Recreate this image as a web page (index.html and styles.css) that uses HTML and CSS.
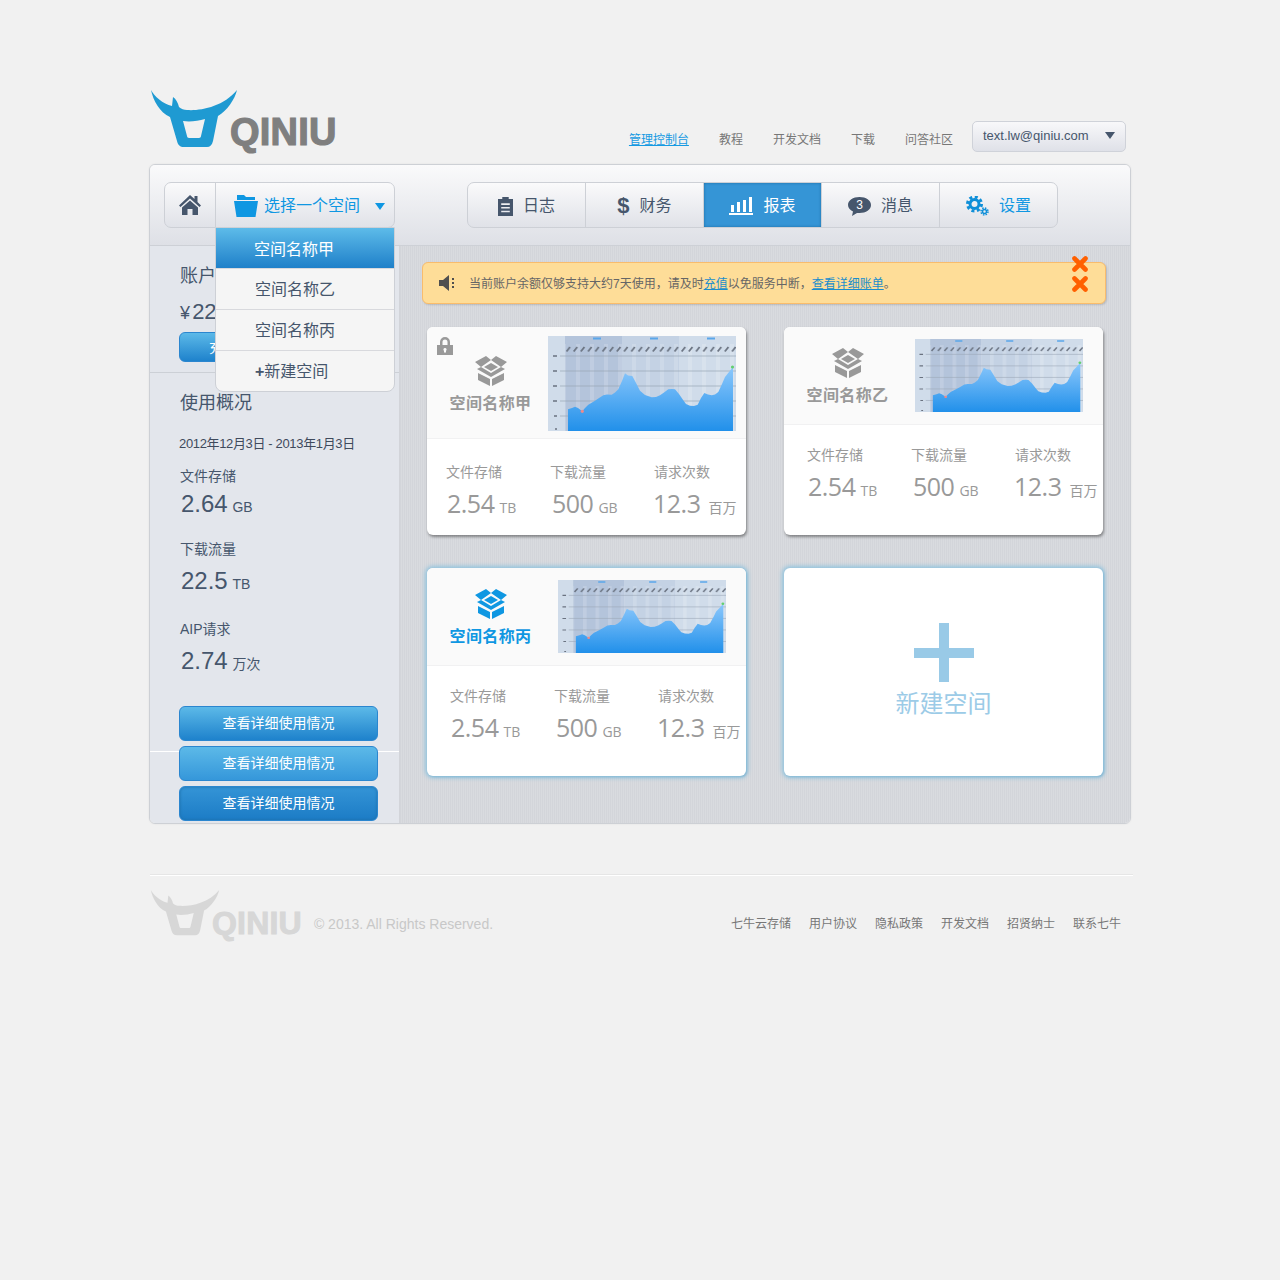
FILE: index.html
```html
<!DOCTYPE html>
<html lang="zh-CN">
<head>
  <meta charset="UTF-8">
  <title>七牛云存储 - 管理控制台</title>
  <link rel="stylesheet" href="styles.css">
</head>
<body>
  <svg class="defs" aria-hidden="true">
    <defs>
      <linearGradient id="areaFill" x1="0" y1="0" x2="0" y2="1">
        <stop offset="0" stop-color="#8cc8fc"/>
        <stop offset="1" stop-color="#2190ea"/>
      </linearGradient>
      <pattern id="chartStripes" width="14" height="95" patternUnits="userSpaceOnUse">
        <rect x="0" width="4" height="95" fill="#fff" opacity=".16"/>
      </pattern>
      <pattern id="chartTicks" x="17" y="8" width="7.2" height="10" patternUnits="userSpaceOnUse">
        <path d="M1.500 7.500 L5 3" stroke="#6b7482" stroke-width="1.800"/>
      </pattern>
    </defs>
    <symbol id="chart" viewBox="0 0 188 95" preserveAspectRatio="none">
      <rect width="188" height="95" fill="#d0dcea"/>
      <rect x="17" width="57" height="95" fill="#b4c4db"/>
      <rect x="74" width="57" height="95" fill="#c4d2e4"/>
      <rect x="17" y="8" width="171" height="87" fill="url(#chartStripes)"/>
      <path d="M12 20H188M12 35H188M12 50H188M12 65H188M12 80H188" stroke="#9aa6b6" stroke-width=".7"/>
      <rect x="17" y="8" width="171" height="10" fill="url(#chartTicks)"/>
      <path d="M45 2.500h8M102 2.500h8M159 2.500h8" stroke="#5aa6ea" stroke-width="2"/>
      <path d="M5 20h4M5 35h4M5 50h4M5 65h4M6 80h3M7 93h2" stroke="#6a7280" stroke-width="1.400"/>
      <path fill="url(#areaFill)" d="M20 73.300L24 72 27 70.700 30 72 34.300 75.300 37 72 40.300 68.700 47 64.700 51 62 55.300 59.300 59 58.500 63.700 58.700 67 56.500 70.300 53.300 74 45 77 37.300 80 39.500 84.300 40 87 45 92 54.700 97 59 103.700 61.300 108 61 112 59.300 116 56.500 120.300 53.300 124 53 127 53.300 131 58 135.300 64.300 138 68 142 69.700 146 70 149.700 68.700 153 62 156.300 57 160 58.500 163.700 59.300 167 58.500 170.300 56 174 48 177 41 181 36 185 30.700V95H20Z"/>
      <circle cx="34.300" cy="75.300" r="1.600" fill="#ee8a8a"/>
      <circle cx="184.500" cy="31" r="1.600" fill="#63cf70"/>
    </symbol>
    <symbol id="bull" viewBox="0 0 88 60">
      <path fill-rule="evenodd" d="M1 1C4 7 13 15 22 17L23 8C26 10 28 14 29 18 31 20 34 21 37 21 50 22 73 18 87 1 85 10 77 22 68 27L63 52C62 56 60 58 57 58H34C30 58 28 56 27 52L20 28C10 24 3 11 1 1ZM33 32L37 47C37 48 38 49 39 49H49C50 49 51 48 51 47L55 30C48 32 40 33 33 32Z"/>
    </symbol>
    <symbol id="box" viewBox="0 0 32 30">
      <path d="M0 6L11 0 16 4 6 11ZM21 0L32 6 26 11 16 4ZM16 7L23 11 16 15 9 11ZM2 13L6 11 16 17 26 11 30 13 16 21ZM3 17L15 23V30L3 24ZM29 17L17 23V30L29 24Z"/>
    </symbol>
    <symbol id="cross" viewBox="0 0 16 16">
      <path d="M2.500 2.500L13.500 13.500M13.500 2.500L2.500 13.500" stroke="#ff6000" stroke-width="4.600" stroke-linecap="round" fill="none"/>
    </symbol>
  </svg>

  <div class="wrap">
    <header class="top">
      <a class="logo" href="#">
        <svg class="logo-bull"><use href="#bull"/></svg>
        <span class="logo-text">QINIU</span>
      </a>
      <nav class="top-nav">
        <a class="on" href="#">管理控制台</a>
        <a href="#">教程</a>
        <a href="#">开发文档</a>
        <a href="#">下载</a>
        <a href="#">问答社区</a>
      </nav>
      <div class="user-box">
        <span>text.lw@qiniu.com</span>
        <i class="caret"></i>
      </div>
    </header>

    <section class="panel">
      <div class="toolbar">
        <div class="space-picker">
          <a class="home-btn" href="#">
            <svg width="24" height="22" viewBox="0 0 24 22" fill="#46566c"><path d="M12 1L1 11.500 2.500 13 12 4.500 21.500 13 23 11.500 19.500 8V2H16.500V5ZM4 13.500L12 6.500 20 13.500V21H14.500V15H9.500V21H4Z"/></svg>
          </a>
          <a class="space-select" href="#">
            <svg width="24" height="22" viewBox="0 0 24 22" fill="#0f97e2"><path d="M3 0H10L12 2H21V5H3ZM0 6H24L21.500 22H2.500Z"/></svg>
            <span>选择一个空间</span>
            <i class="caret caret-blue"></i>
          </a>
          <ul class="space-menu">
            <li class="on">空间名称甲</li>
            <li>空间名称乙</li>
            <li>空间名称丙</li>
            <li><b>+</b>新建空间</li>
          </ul>
        </div>
        <nav class="tabs">
          <a href="#">
            <svg width="15" height="19" viewBox="0 0 14 18" preserveAspectRatio="none" fill="#46566c"><path fill-rule="evenodd" d="M4 0H10V2H14V18H0V2H4ZM3 6V7.500H11V6ZM3 9.500V11H11V9.500ZM3 13V14.500H11V13Z"/></svg>
            日志
          </a>
          <a href="#"><em class="dollar">$</em>财务</a>
          <a class="on" href="#">
            <svg width="24" height="18" viewBox="0 0 24 18" fill="#fff"><path d="M2 8H5V15H2ZM8 5H11V15H8ZM14 3H17V15H14ZM20 0H23V15H20ZM0 16H24V18H0Z"/></svg>
            报表
          </a>
          <a href="#">
            <svg width="23" height="19" viewBox="0 0 23 19"><path fill="#46566c" d="M11.500 0C18 0 23 3.500 23 8S18 16 11.500 16H9L4 19 5 14.500C2 13 0 10.800 0 8 0 3.500 5 0 11.500 0Z"/><text x="11.500" y="12" text-anchor="middle" class="bubble-num">3</text></svg>
            消息
          </a>
          <a class="tab-blue" href="#">
            <svg width="23" height="20" viewBox="0 0 23 20" fill="none" stroke="#0f8fd8"><circle cx="8.500" cy="8" r="4.500" stroke-width="3"/><circle cx="8.500" cy="8" r="7" stroke-width="3" stroke-dasharray="3 2.500"/><circle cx="18.500" cy="15.500" r="2" stroke-width="1.500"/><circle cx="18.500" cy="15.500" r="3.500" stroke-width="1.500" stroke-dasharray="1.500 1.250"/></svg>
            设置
          </a>
        </nav>
      </div>

      <div class="panel-body">
        <aside class="side">
          <div class="account">
            <h3>账户余额</h3>
            <p class="balance"><small>¥</small> 2200.00</p>
            <a class="btn btn-small" href="#">充值</a>
          </div>
          <div class="usage">
            <h3>使用概况</h3>
            <p class="range">2012年12月3日 - 2013年1月3日</p>
            <div class="stat">
              <p>文件存储</p>
              <strong>2.64 <small>GB</small></strong>
            </div>
            <div class="stat stat-b">
              <p>下载流量</p>
              <strong>22.5 <small>TB</small></strong>
            </div>
            <div class="stat stat-c">
              <p>AIP请求</p>
              <strong>2.74 <small>万次</small></strong>
            </div>
            <div class="side-btns">
              <a class="btn" href="#">查看详细使用情况</a>
              <a class="btn btn-hover" href="#">查看详细使用情况</a>
              <a class="btn btn-down" href="#">查看详细使用情况</a>
            </div>
          </div>
        </aside>

        <main class="content">
          <div class="notice">
            <svg width="16" height="16" viewBox="0 0 16 16" fill="#4f4f4f"><path d="M0 5H4L10 0V16L4 11H0ZM13 3H15V5H13ZM13 7H15V9H13ZM13 11H15V13H13Z"/></svg>
            <p>当前账户余额仅够支持大约7天使用，请及时<a href="#">充值</a>以免服务中断，<a href="#">查看详细账单</a>。</p>
            <svg class="close close-a"><use href="#cross"/></svg>
            <svg class="close close-b"><use href="#cross"/></svg>
          </div>

          <div class="cards">
            <article class="card card-big">
              <svg class="lock" width="16" height="18" viewBox="0 0 16 18"><path fill="#999" fill-rule="evenodd" d="M3 8V5A5 5 0 0 1 13 5V8H16V18H0V8ZM5.500 8H10.500V5A2.500 2.500 0 0 0 5.500 5ZM8 11A1.500 1.500 0 0 0 7 13.700V15.500H9V13.700A1.500 1.500 0 0 0 8 11Z"/></svg>
              <div class="card-top">
                <div class="card-name">
                  <svg class="box"><use href="#box"/></svg>
                  <h4>空间名称甲</h4>
                </div>
                <svg class="chart"><use href="#chart"/></svg>
              </div>
              <div class="card-stats">
                <div><p>文件存储</p><strong>2.54 <small>TB</small></strong></div>
                <div><p>下载流量</p><strong>500 <small>GB</small></strong></div>
                <div><p>请求次数</p><strong>12.3 <small>百万</small></strong></div>
              </div>
            </article>

            <article class="card">
              <div class="card-top">
                <div class="card-name">
                  <svg class="box"><use href="#box"/></svg>
                  <h4>空间名称乙</h4>
                </div>
                <svg class="chart"><use href="#chart"/></svg>
              </div>
              <div class="card-stats">
                <div><p>文件存储</p><strong>2.54 <small>TB</small></strong></div>
                <div><p>下载流量</p><strong>500 <small>GB</small></strong></div>
                <div><p>请求次数</p><strong>12.3 <small>百万</small></strong></div>
              </div>
            </article>

            <article class="card card-on">
              <div class="card-top">
                <div class="card-name">
                  <svg class="box"><use href="#box"/></svg>
                  <h4>空间名称丙</h4>
                </div>
                <svg class="chart"><use href="#chart"/></svg>
              </div>
              <div class="card-stats">
                <div><p>文件存储</p><strong>2.54 <small>TB</small></strong></div>
                <div><p>下载流量</p><strong>500 <small>GB</small></strong></div>
                <div><p>请求次数</p><strong>12.3 <small>百万</small></strong></div>
              </div>
            </article>

            <a class="card card-on card-new" href="#">
              <i class="plus"></i>
              <span>新建空间</span>
            </a>
          </div>
        </main>
      </div>
    </section>

    <footer class="foot">
      <a class="logo logo-foot" href="#">
        <svg class="logo-bull"><use href="#bull"/></svg>
        <span class="logo-text">QINIU</span>
      </a>
      <p class="copy">© 2013. All Rights Reserved.</p>
      <nav class="foot-nav">
        <a href="#">七牛云存储</a>
        <a href="#">用户协议</a>
        <a href="#">隐私政策</a>
        <a href="#">开发文档</a>
        <a href="#">招贤纳士</a>
        <a href="#">联系七牛</a>
      </nav>
    </footer>
  </div>
</body>
</html>
```

FILE: styles.css
```css
html, body { margin: 0; padding: 0; }
body {
  min-height: 1280px;
  background-color: #f1f1f1;
  color: #46566c;
  font: 14px/20px "Liberation Sans", "Noto Sans CJK SC", sans-serif;
}
h3, h4, p, ul { margin: 0; padding: 0; }
ul { list-style: none; }
a { color: inherit; text-decoration: none; }
em, i { font-style: normal; }
.defs { position: absolute; width: 0; height: 0; }

.wrap { width: 982px; margin-left: 149px; }

/* header */
.top {
  display: flex;
  align-items: flex-end;
  height: 152px;
  padding-bottom: 12px;
}
.logo { display: flex; align-items: flex-end; margin: 0 0 3px 1px; }
.logo-bull { width: 88px; height: 60px; fill: #1f9ad2; flex: none; }
.logo-text {
  margin: 0 0 1px -8px;
  font: bold 38px/32px "Liberation Sans", sans-serif;
  letter-spacing: .2px;
  color: #7f7f7f;
  -webkit-text-stroke: 1.2px #7f7f7f;
}
.top-nav {
  display: flex;
  gap: 30px;
  margin-left: auto;
  margin-bottom: 2px;
  font-size: 12px;
  color: #777;
}
.top-nav .on { color: #159ae2; text-decoration: underline; }
.user-box {
  display: flex;
  align-items: center;
  justify-content: space-between;
  box-sizing: border-box;
  width: 154px;
  height: 31px;
  margin: 0 5px 0 19px;
  padding: 0 10px 2px;
  border: 1px solid #cfd2d9;
  border-radius: 5px;
  background: linear-gradient(#f8f8fa, #dfe1e8);
  font: 13px "Liberation Sans", sans-serif;
  color: #46566c;
}
.caret {
  width: 0;
  height: 0;
  border-style: solid;
  border-width: 7px 5px 0;
  border-color: #46566c transparent transparent;
}
.caret-blue { border-color: #0f97e2 transparent transparent; }

/* panel */
.panel {
  border: 1px solid #cdd0d5;
  border-radius: 6px;
  overflow: hidden;
  box-shadow: 0 0 2px rgba(0, 0, 0, .08);
}
.toolbar {
  display: flex;
  box-sizing: border-box;
  height: 81px;
  padding: 17px 14px 0;
  border-bottom: 1px solid #cdd0d6;
  background: linear-gradient(#fafafb, #dee0e6);
}
.space-picker {
  position: relative;
  display: flex;
  height: 46px;
  box-sizing: border-box;
  border: 1px solid #cdd0d6;
  border-radius: 7px;
  background: linear-gradient(#fafafb, #e0e2e8);
}
.home-btn {
  display: flex;
  align-items: center;
  justify-content: center;
  width: 50px;
  border-right: 1px solid #cdd0d6;
}
.space-select {
  display: flex;
  align-items: center;
  width: 178px;
  box-sizing: border-box;
  padding: 2px 9px 0 18px;
  color: #0f97e2;
  font-size: 16px;
}
.space-select span { margin-left: 6px; margin-right: auto; }
.space-menu {
  position: absolute;
  top: 44px;
  left: 50px;
  z-index: 5;
  width: 180px;
  box-sizing: border-box;
  border: 1px solid #cdd0d6;
  border-radius: 0 0 8px 8px;
  background: #f5f5f5;
  overflow: hidden;
  font-size: 16px;
  line-height: 42px;
}
.space-menu li { height: 40px; padding-left: 39px; border-top: 1px solid #d8d9dd; }
.space-menu .on {
  padding-left: 38px;
  border-top: 0;
  color: #fff;
  line-height: 44px;
  background: linear-gradient(#5dbbe9, #1f80c9);
}
.space-menu b { font-weight: bold; }
.tabs {
  display: flex;
  height: 46px;
  box-sizing: border-box;
  margin-left: 72px;
  border: 1px solid #cdd0d6;
  border-radius: 7px;
  background: linear-gradient(#fafafb, #e0e2e8);
  overflow: hidden;
}
.tabs a {
  display: flex;
  align-items: center;
  justify-content: center;
  gap: 10px;
  box-sizing: border-box;
  width: 118px;
  padding-top: 2px;
  font-size: 16px;
  border-left: 1px solid #cdd0d6;
}
.tabs a:first-child { width: 117px; border-left: 0; }
.tabs .on {
  color: #fff;
  background: #3595d6;
  box-shadow: inset 0 0 3px #1d6fa8;
}
.tabs .tab-blue { color: #0f97e2; }
.dollar { font: bold 22px "Liberation Sans", sans-serif; }
.bubble-num { font: 12px "Liberation Sans", sans-serif; fill: #fff; }

/* sidebar */
.panel-body { display: flex; height: 577px; }
.side {
  flex: none;
  width: 249px;
  border-right: 1px solid #d2d4d9;
  background: #e3e6ec;
}
.side h3 { padding-left: 1px; font-size: 18px; font-weight: normal; line-height: 24px; }
.account {
  box-sizing: border-box;
  height: 127px;
  padding: 18px 29px 0;
  border-bottom: 1px solid #ccd0d6;
}
.balance { margin-top: 11px; padding-left: 1px; font-size: 22px; line-height: 26px; word-spacing: -4px; }
.balance small { font-size: 18px; }
.usage { padding: 18px 29px 0; }
.range { margin-top: 19px; font-size: 13px; letter-spacing: -.35px; color: #3f4a5c; }
.stat { margin-top: 12px; }
.stat p { padding-left: 1px; font-size: 14px; }
.stat strong {
  display: block;
  margin-top: 2px;
  padding-left: 2px;
  font-size: 24px;
  font-weight: normal;
  line-height: 32px;
}
.stat small { margin-left: -2px; font-size: 14px; }
.stat-b { margin-top: 16px; }
.stat-c { margin-top: 19px; }
.stat-b strong { margin-top: 6px; }
.stat-c strong { margin-top: 6px; }
.side-btns {
  position: relative;
  display: flex;
  flex-direction: column;
  gap: 5px;
  margin-top: 26px;
}
.side-btns::before {
  content: "";
  position: absolute;
  top: 45px;
  left: -29px;
  width: 249px;
  border-top: 1px solid #fff;
}
.btn {
  position: relative;
  display: block;
  box-sizing: border-box;
  width: 199px;
  height: 35px;
  border: 1px solid #2b86cf;
  border-radius: 6px;
  background: linear-gradient(#5cb9e8, #1e82cc);
  color: #fff;
  font-size: 14px;
  line-height: 33px;
  text-align: center;
}
.btn-small { width: 88px; height: 30px; margin-top: 6px; line-height: 28px; }
.btn-hover { background: linear-gradient(#5cb9e8, #3597da); }
.btn-down { background: linear-gradient(#3494d6, #1c7cc6); box-shadow: inset 0 0 3px #1d6fa8; }

/* content */
.content {
  flex: 1;
  padding: 16px 24px 0 22px;
  background: repeating-linear-gradient(90deg, #d3d5da 0 1px, #d9dbdf 1px 2px);
}
.notice {
  position: relative;
  display: flex;
  align-items: center;
  gap: 14px;
  box-sizing: border-box;
  height: 42px;
  padding-left: 16px;
  border: 1px solid #f9bc6c;
  border-radius: 6px;
  background: #fedd98;
  box-shadow: 1px 1px 2px rgba(0, 0, 0, .15);
  font-size: 12px;
  color: #666;
}
.notice p { padding-top: 2px; }
.notice a { color: #1a8dcc; text-decoration: underline; }
.close { position: absolute; left: 649px; width: 16px; height: 16px; }
.close-a { top: -7px; }
.close-b { top: 13px; }

.cards {
  display: grid;
  grid-template-columns: 319px 319px;
  grid-template-rows: 208px 208px;
  gap: 33px 38px;
  margin: 23px 0 0 5px;
}
.card {
  position: relative;
  display: block;
  border-radius: 6px;
  background: #fff;
  box-shadow: 1px 2px 3px rgba(0, 0, 0, .4);
}
.card-top {
  display: flex;
  box-sizing: border-box;
  height: 98px;
  padding-top: 12px;
  border-bottom: 1px solid #f1f1f2;
  border-radius: 6px 6px 0 0;
  background: #fafafa;
}
.card-name { flex: none; width: 126px; padding: 9px 0 0 1px; box-sizing: border-box; text-align: center; }
.box { display: block; width: 32px; height: 30px; margin: 0 auto; fill: #999; }
.card-name h4 { margin-top: 6px; font-size: 16px; line-height: 24px; letter-spacing: .4px; color: #999; }
.chart { width: 168px; height: 73px; margin-left: 5px; filter: blur(.5px); }
.card-stats {
  display: grid;
  grid-template-columns: 104px 104px 90px;
  padding: 20px 0 0 23px;
  color: #999;
  white-space: nowrap;
}
.card-stats p { font-size: 14px; }
.card-stats strong {
  display: block;
  margin-top: 5px;
  font: 25px/32px "Open Sans", "Noto Sans CJK SC", sans-serif;
  letter-spacing: -.5px;
}
.card-stats small { font-size: 14px; margin-left: -1px; letter-spacing: 0; }
.card-stats div:nth-child(1) strong { margin-left: 1px; }
.card-stats div:nth-child(2) strong { margin-left: 2px; }
.card-stats div:nth-child(3) strong { margin-left: -1px; }
.card-stats div:nth-child(3) small { margin-left: 2px; }

.card-big .card-top { height: 112px; padding-top: 9px; }
.card-big .card-name { padding-top: 20px; }
.card-big .chart { width: 188px; height: 95px; margin-left: -5px; }
.card-big .card-stats { padding: 23px 0 0 19px; }
.lock { position: absolute; top: 10px; left: 10px; }

.card-on { box-shadow: 0 0 4px 2px #93c4de, 1px 1px 2px #6fa3c2; }
.card-on h4 { color: #0f97e2; }
.card-on .box { fill: #0f97e2; }
.card-new {
  display: flex;
  flex-direction: column;
  align-items: center;
  padding-top: 55px;
  box-sizing: border-box;
}
.plus {
  width: 60px;
  height: 59px;
  background:
    linear-gradient(#99cae7, #99cae7) center / 60px 10px no-repeat,
    linear-gradient(#99cae7, #99cae7) center / 10px 59px no-repeat;
}
.card-new span { margin-top: 6px; font-size: 24px; line-height: 32px; color: #9ccbe7; }

/* footer */
.foot {
  display: flex;
  align-items: flex-start;
  margin: 50px -2px 0 1px;
  border-top: 1px solid #e6e6e6;
  box-shadow: inset 0 1px 0 #fff;
  padding-top: 14px;
}
.logo-foot { margin: 0; }
.logo-foot .logo-bull { width: 70px; height: 48px; fill: #d7d7d7; }
.logo-foot .logo-text {
  margin: 0 0 0 -8px;
  font-size: 32px;
  line-height: 28px;
  color: #d7d7d7;
  -webkit-text-stroke: 1px #d7d7d7;
}
.copy { margin: 25px 0 0 12px; font-size: 14px; color: #c8c8c8; }
.foot-nav {
  display: flex;
  gap: 18px;
  margin: 25px 12px 0 auto;
  font-size: 12px;
  color: #777;
}
```
